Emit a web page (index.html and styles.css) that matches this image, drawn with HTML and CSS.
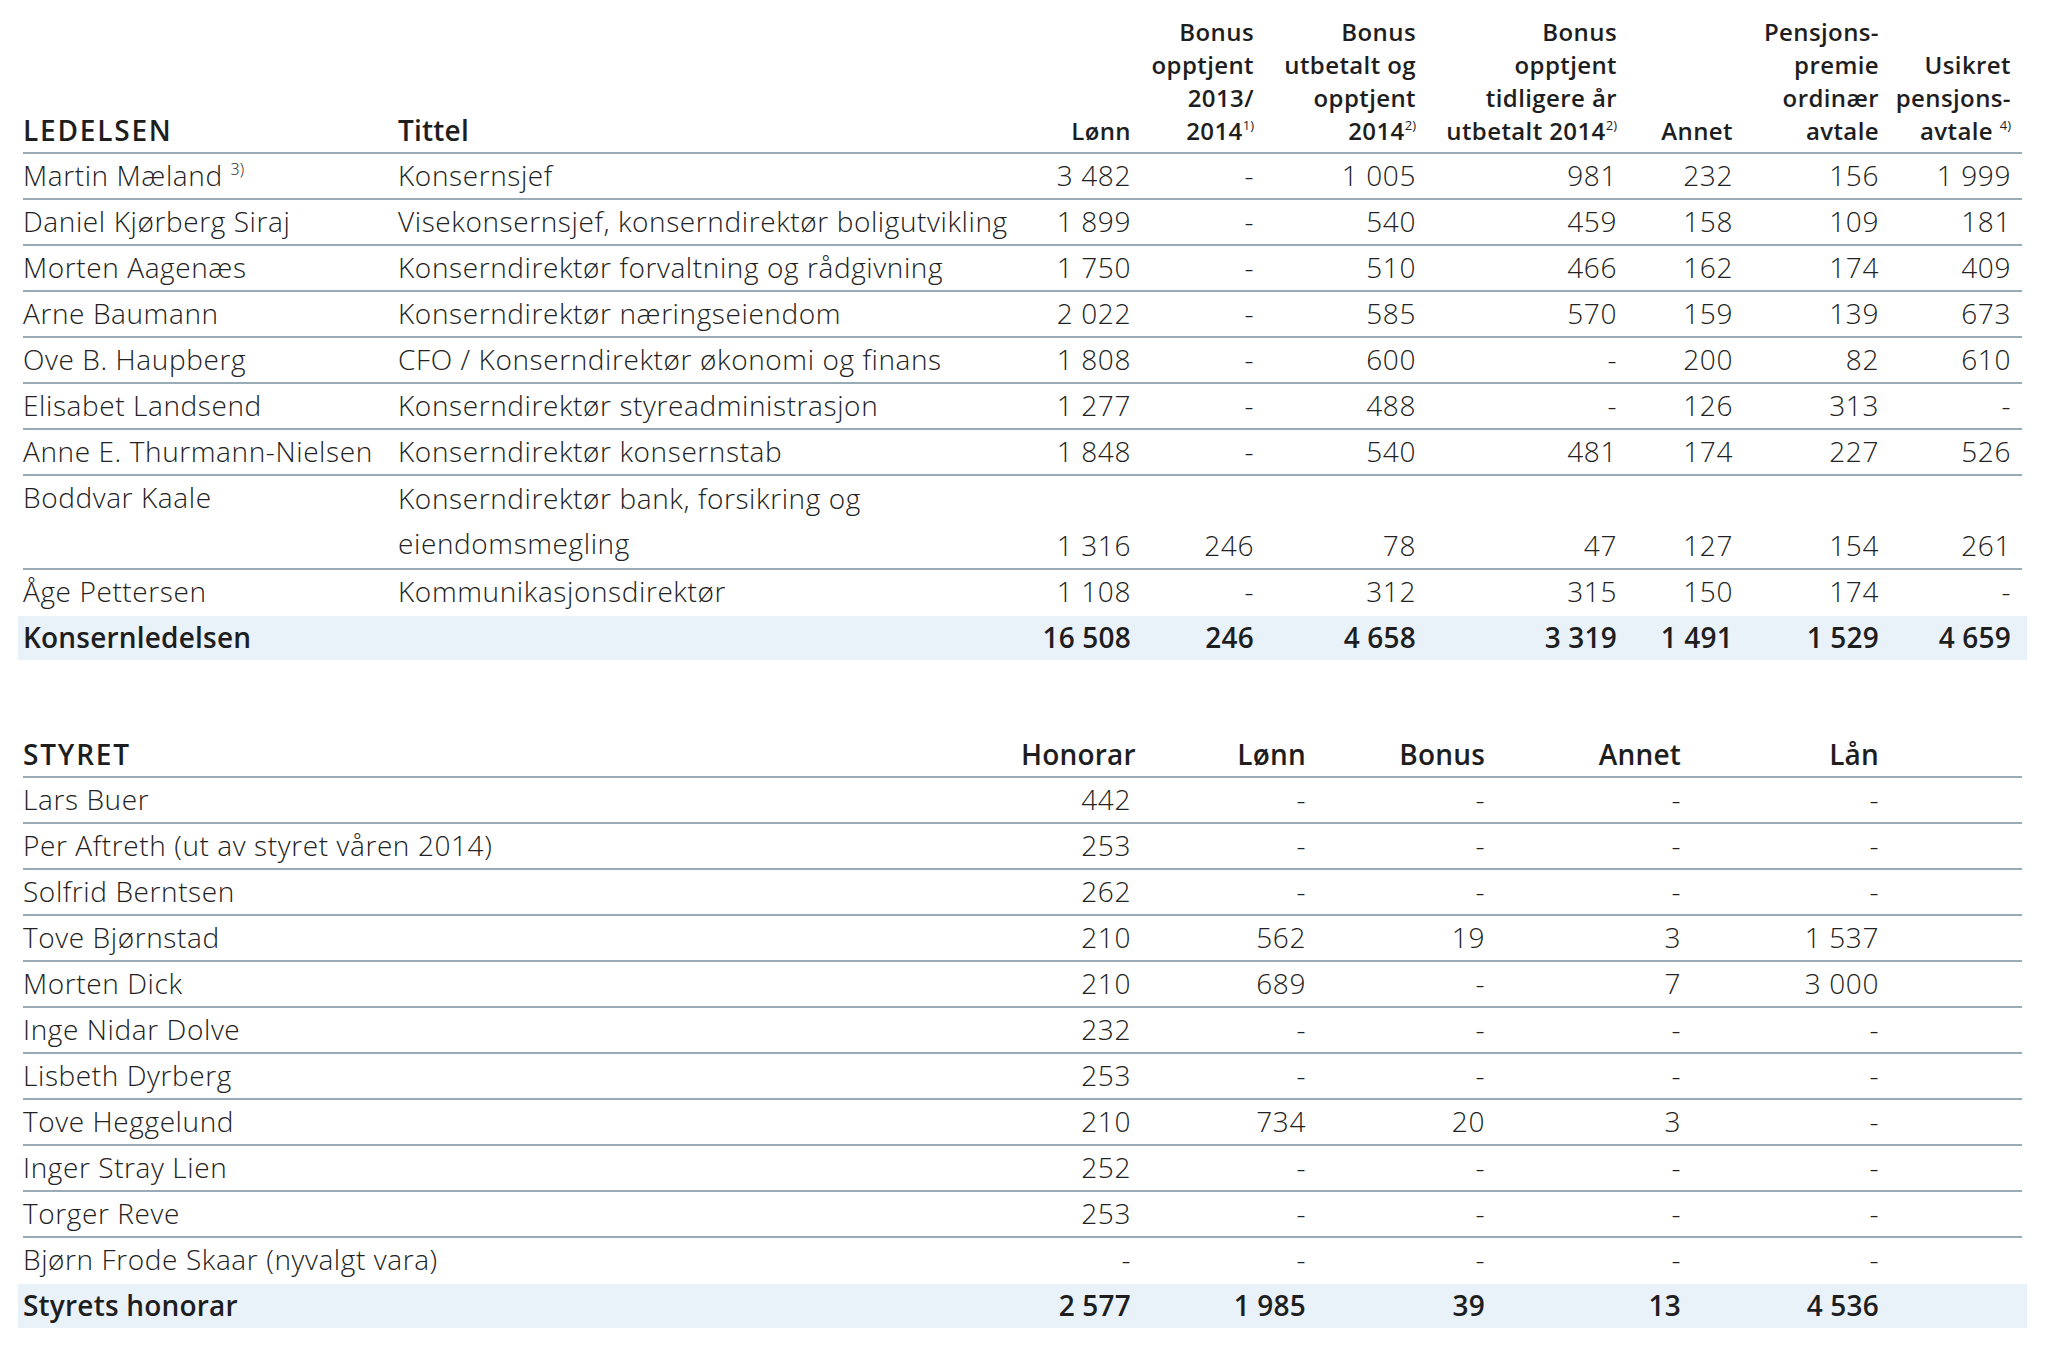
FILE: index.html
```html
<!DOCTYPE html>
<html lang="no">
<head>
<meta charset="utf-8">
<title>Godtgjørelse ledelsen og styret</title>
<link rel="stylesheet" href="styles.css">
</head>
<body>
<main class="page">
  <table class="grid grid-lead">
    <colgroup>
      <col class="c-name"><col class="c-title"><col class="c-lonn"><col class="c-b1"><col class="c-b2"><col class="c-b3"><col class="c-annet"><col class="c-pens"><col class="c-usik">
    </colgroup>
    <thead>
      <tr>
        <th class="t-left big caps">LEDELSEN</th>
        <th class="t-left big">Tittel</th>
        <th class="num">Lønn</th>
        <th class="num">Bonus<br>opptjent<br>2013/<br>2014<sup>1)</sup></th>
        <th class="num">Bonus<br>utbetalt og<br>opptjent<br>2014<sup>2)</sup></th>
        <th class="num">Bonus<br>opptjent<br>tidligere år<br>utbetalt 2014<sup>2)</sup></th>
        <th class="num">Annet</th>
        <th class="num">Pensjons-<br>premie<br>ordinær<br>avtale</th>
        <th class="num last-col">Usikret<br>pensjons-<br>avtale <sup>4)</sup></th>
      </tr>
    </thead>
    <tbody>
      <tr><td class="txt">Martin Mæland <sup class="note">3)</sup></td><td class="txt">Konsernsjef</td><td class="num">3 482</td><td class="num">-</td><td class="num">1 005</td><td class="num">981</td><td class="num">232</td><td class="num">156</td><td class="num last-col">1 999</td></tr>
      <tr><td class="txt">Daniel Kjørberg Siraj</td><td class="txt">Visekonsernsjef, konserndirektør boligutvikling</td><td class="num">1 899</td><td class="num">-</td><td class="num">540</td><td class="num">459</td><td class="num">158</td><td class="num">109</td><td class="num last-col">181</td></tr>
      <tr><td class="txt">Morten Aagenæs</td><td class="txt">Konserndirektør forvaltning og rådgivning</td><td class="num">1 750</td><td class="num">-</td><td class="num">510</td><td class="num">466</td><td class="num">162</td><td class="num">174</td><td class="num last-col">409</td></tr>
      <tr><td class="txt">Arne Baumann</td><td class="txt">Konserndirektør næringseiendom</td><td class="num">2 022</td><td class="num">-</td><td class="num">585</td><td class="num">570</td><td class="num">159</td><td class="num">139</td><td class="num last-col">673</td></tr>
      <tr><td class="txt">Ove B. Haupberg</td><td class="txt">CFO / Konserndirektør økonomi og finans</td><td class="num">1 808</td><td class="num">-</td><td class="num">600</td><td class="num">-</td><td class="num">200</td><td class="num">82</td><td class="num last-col">610</td></tr>
      <tr><td class="txt">Elisabet Landsend</td><td class="txt">Konserndirektør styreadministrasjon</td><td class="num">1 277</td><td class="num">-</td><td class="num">488</td><td class="num">-</td><td class="num">126</td><td class="num">313</td><td class="num last-col">-</td></tr>
      <tr><td class="txt">Anne E. Thurmann-Nielsen</td><td class="txt">Konserndirektør konsernstab</td><td class="num">1 848</td><td class="num">-</td><td class="num">540</td><td class="num">481</td><td class="num">174</td><td class="num">227</td><td class="num last-col">526</td></tr>
      <tr class="tall"><td class="txt">Boddvar Kaale</td><td class="txt wrap">Konserndirektør bank, forsikring og<br>eiendomsmegling</td><td class="num">1 316</td><td class="num">246</td><td class="num">78</td><td class="num">47</td><td class="num">127</td><td class="num">154</td><td class="num last-col">261</td></tr>
      <tr class="pre-total"><td class="txt">Åge Pettersen</td><td class="txt">Kommunikasjonsdirektør</td><td class="num">1 108</td><td class="num">-</td><td class="num">312</td><td class="num">315</td><td class="num">150</td><td class="num">174</td><td class="num last-col">-</td></tr>
      <tr class="total"><td class="txt">Konsernledelsen</td><td class="txt"></td><td class="num">16 508</td><td class="num">246</td><td class="num">4 658</td><td class="num">3 319</td><td class="num">1 491</td><td class="num">1 529</td><td class="num last-col">4 659</td></tr>
    </tbody>
  </table>

  <table class="grid grid-board">
    <colgroup>
      <col class="d-name"><col class="d-hon"><col class="d-lonn"><col class="d-bonus"><col class="d-annet"><col class="d-lan"><col class="d-rest">
    </colgroup>
    <thead>
      <tr>
        <th class="t-left big caps">STYRET</th>
        <th class="num big">Honorar</th>
        <th class="num big">Lønn</th>
        <th class="num big">Bonus</th>
        <th class="num big">Annet</th>
        <th class="num big">Lån</th>
        <th class="big"></th>
      </tr>
    </thead>
    <tbody>
      <tr><td class="txt">Lars Buer</td><td class="num">442</td><td class="num">-</td><td class="num">-</td><td class="num">-</td><td class="num">-</td><td></td></tr>
      <tr><td class="txt">Per Aftreth (ut av styret våren 2014)</td><td class="num">253</td><td class="num">-</td><td class="num">-</td><td class="num">-</td><td class="num">-</td><td></td></tr>
      <tr><td class="txt">Solfrid Berntsen</td><td class="num">262</td><td class="num">-</td><td class="num">-</td><td class="num">-</td><td class="num">-</td><td></td></tr>
      <tr><td class="txt">Tove Bjørnstad</td><td class="num">210</td><td class="num">562</td><td class="num">19</td><td class="num">3</td><td class="num">1 537</td><td></td></tr>
      <tr><td class="txt">Morten Dick</td><td class="num">210</td><td class="num">689</td><td class="num">-</td><td class="num">7</td><td class="num">3 000</td><td></td></tr>
      <tr><td class="txt">Inge Nidar Dolve</td><td class="num">232</td><td class="num">-</td><td class="num">-</td><td class="num">-</td><td class="num">-</td><td></td></tr>
      <tr><td class="txt">Lisbeth Dyrberg</td><td class="num">253</td><td class="num">-</td><td class="num">-</td><td class="num">-</td><td class="num">-</td><td></td></tr>
      <tr><td class="txt">Tove Heggelund</td><td class="num">210</td><td class="num">734</td><td class="num">20</td><td class="num">3</td><td class="num">-</td><td></td></tr>
      <tr><td class="txt">Inger Stray Lien</td><td class="num">252</td><td class="num">-</td><td class="num">-</td><td class="num">-</td><td class="num">-</td><td></td></tr>
      <tr><td class="txt">Torger Reve</td><td class="num">253</td><td class="num">-</td><td class="num">-</td><td class="num">-</td><td class="num">-</td><td></td></tr>
      <tr class="pre-total"><td class="txt">Bjørn Frode Skaar (nyvalgt vara)</td><td class="num">-</td><td class="num">-</td><td class="num">-</td><td class="num">-</td><td class="num">-</td><td></td></tr>
      <tr class="total"><td class="txt">Styrets honorar</td><td class="num">2 577</td><td class="num">1 985</td><td class="num">39</td><td class="num">13</td><td class="num">4 536</td><td></td></tr>
    </tbody>
  </table>
</main>
</body>
</html>
```

FILE: styles.css
```css
* { box-sizing: border-box; }

html, body {
  margin: 0;
  padding: 0;
  background: #ffffff;
}

body {
  font-family: "Open Sans", Lato, "Liberation Sans", sans-serif;
  color: #222222;
  font-weight: 300;
}

.page {
  padding: 15px 31px 0 23px;
  width: 2053px;
}

.grid {
  width: 1999px;
  table-layout: fixed;
  border-collapse: separate;
  border-spacing: 0;
}

.grid-board {
  margin-top: 78px;
}

/* column widths – ledelsen */
.c-name  { width: 375px; }
.c-title { width: 623px; }
.c-lonn  { width: 110px; }
.c-b1    { width: 123px; }
.c-b2    { width: 162px; }
.c-b3    { width: 201px; }
.c-annet { width: 116px; }
.c-pens  { width: 146px; }
.c-usik  { width: 143px; }

/* column widths – styret */
.d-name  { width: 998px; }
.d-hon   { width: 110px; }
.d-lonn  { width: 175px; }
.d-bonus { width: 179px; }
.d-annet { width: 196px; }
.d-lan   { width: 198px; }
.d-rest  { width: 143px; }

/* header */
.grid th {
  font-weight: 600;
  font-size: 24px;
  line-height: 33px;
  padding: 0 0 5px 0;
  vertical-align: bottom;
  border-bottom: 2px solid #9aabb8;
  white-space: nowrap;
  color: #1e1e1e;
  letter-spacing: 0.4px;
}

.grid th.big {
  font-size: 28px;
  letter-spacing: 0.2px;
}

.grid th.caps {
  letter-spacing: 1.8px;
}

.grid th.t-left { text-align: left; }
.grid th.num { text-align: right; }

.grid th sup {
  font-size: 13px;
  line-height: 0;
  vertical-align: 10px;
  font-weight: 400;
  letter-spacing: 0;
}

/* body cells */
.grid td {
  font-size: 28px;
  line-height: 42px;
  height: 46px;
  padding: 0 0 2px 0;
  border-bottom: 2px solid #9aabb8;
  white-space: nowrap;
  letter-spacing: 0.6px;
}

.grid td.txt {
  text-align: left;
  vertical-align: top;
}

.grid td.num {
  text-align: right;
  vertical-align: bottom;
}

.grid .last-col { padding-right: 11px; }

.grid td .note {
  font-size: 16px;
  line-height: 0;
  vertical-align: 11px;
  letter-spacing: 0;
}

.grid tr.tall td { height: 92px; }
.grid tr.tall td.wrap { line-height: 45px; }

.grid tr.pre-total td { border-bottom-color: transparent; }

.grid tr.total td {
  background: #e9f1f9;
  font-weight: 600;
  border-bottom: none;
  height: 44px;
  color: #1e1e1e;
  letter-spacing: 0.2px;
}

.grid tr.total td:first-child { box-shadow: -5px 0 0 #e9f1f9; }
.grid tr.total td:last-child { box-shadow: 5px 0 0 #e9f1f9; }
```
